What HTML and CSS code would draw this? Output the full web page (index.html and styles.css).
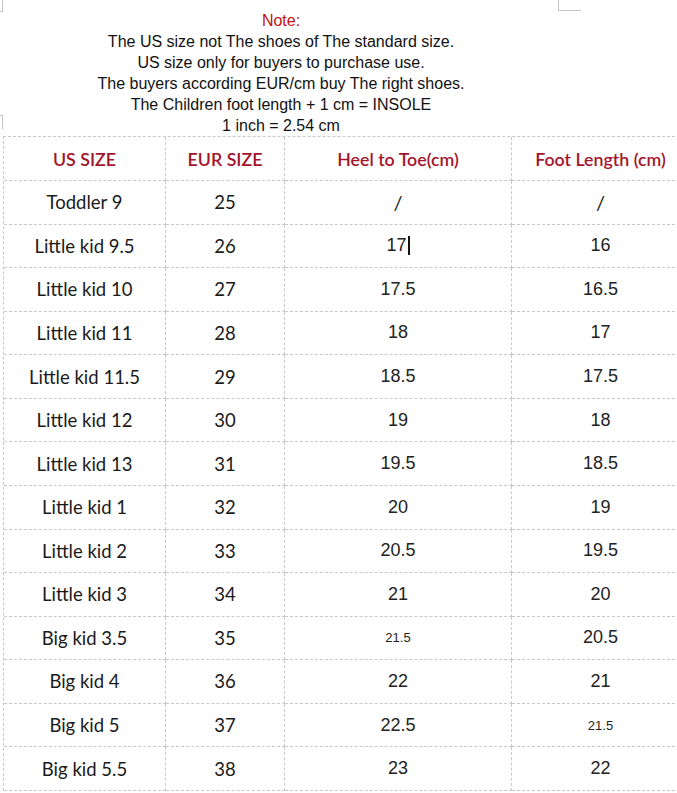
FILE: index.html
```html
<!DOCTYPE html>
<html>
<head>
<meta charset="utf-8">
<link rel="stylesheet" href="styles.css">
</head>
<body>
<div class="page">
  <span class="mark mark-tl"></span>
  <span class="mark mark-tr"></span>
  <span class="mark mark-l"></span>
  <div class="note">
    <div class="note-title">Note:</div>
    <div>The US size not The shoes of The standard size.</div>
    <div>US size only for buyers to purchase use.</div>
    <div>The buyers according EUR/cm buy The right shoes.</div>
    <div>The Children foot length + 1 cm = INSOLE</div>
    <div>1 inch = 2.54 cm</div>
  </div>
  <div class="table">
    <div class="cell head">US SIZE</div>
    <div class="cell head">EUR SIZE</div>
    <div class="cell head">Heel to Toe(cm)</div>
    <div class="cell head">Foot Length (cm)</div>

    <div class="cell c1">Toddler 9</div><div class="cell c2">25</div><div class="cell c3 slash">/</div><div class="cell c4 slash">/</div>
    <div class="cell c1">Little kid 9.5</div><div class="cell c2">26</div><div class="cell c3">17<span class="caret"></span></div><div class="cell c4">16</div>
    <div class="cell c1">Little kid 10</div><div class="cell c2">27</div><div class="cell c3">17.5</div><div class="cell c4">16.5</div>
    <div class="cell c1">Little kid 11</div><div class="cell c2">28</div><div class="cell c3">18</div><div class="cell c4">17</div>
    <div class="cell c1">Little kid 11.5</div><div class="cell c2">29</div><div class="cell c3">18.5</div><div class="cell c4">17.5</div>
    <div class="cell c1">Little kid 12</div><div class="cell c2">30</div><div class="cell c3">19</div><div class="cell c4">18</div>
    <div class="cell c1">Little kid 13</div><div class="cell c2">31</div><div class="cell c3">19.5</div><div class="cell c4">18.5</div>
    <div class="cell c1">Little kid 1</div><div class="cell c2">32</div><div class="cell c3">20</div><div class="cell c4">19</div>
    <div class="cell c1">Little kid 2</div><div class="cell c2">33</div><div class="cell c3">20.5</div><div class="cell c4">19.5</div>
    <div class="cell c1">Little kid 3</div><div class="cell c2">34</div><div class="cell c3">21</div><div class="cell c4">20</div>
    <div class="cell c1">Big kid 3.5</div><div class="cell c2">35</div><div class="cell c3 small">21.5</div><div class="cell c4">20.5</div>
    <div class="cell c1">Big kid 4</div><div class="cell c2">36</div><div class="cell c3">22</div><div class="cell c4">21</div>
    <div class="cell c1">Big kid 5</div><div class="cell c2">37</div><div class="cell c3">22.5</div><div class="cell c4 small">21.5</div>
    <div class="cell c1">Big kid 5.5</div><div class="cell c2">38</div><div class="cell c3">23</div><div class="cell c4">22</div>
  </div>
</div>
</body>
</html>
```
FILE: styles.css
```css
html, body {
  margin: 0;
  padding: 0;
  background: #ffffff;
}
body {
  width: 677px;
  height: 793px;
  overflow: hidden;
}
.page {
  position: relative;
  width: 677px;
  height: 793px;
}
.mark {
  position: absolute;
  border-color: #c4c4c4;
  border-style: solid;
  border-width: 0;
}
.mark-tl {
  left: 0;
  top: 0;
  width: 2px;
  height: 11px;
  border-right-width: 1px;
  border-bottom-width: 1px;
}
.mark-tr {
  left: 558px;
  top: 0;
  width: 22px;
  height: 10px;
  border-left-width: 1px;
  border-bottom-width: 1px;
}
.mark-l {
  left: 0;
  top: 115px;
  width: 2px;
  height: 13px;
  border-right-width: 1px;
  border-top-width: 1px;
}
.note {
  width: 562px;
  padding-top: 10px;
  height: 126px;
  box-sizing: border-box;
  text-align: center;
  font-family: "Liberation Sans", Arial, sans-serif;
  font-size: 16px;
  line-height: 21px;
  color: #111111;
}
.note-title {
  color: #c4100c;
}
.table {
  margin-top: 10px;
  margin-left: 3px;
  width: 686px;
  display: grid;
  grid-template-columns: 162px 119px 227px 178px;
  grid-template-rows: 44px repeat(14, 43.57px);
  border-top: 1px dashed #c9c9c9;
  border-left: 1px dashed #c9c9c9;
}
.cell {
  display: flex;
  align-items: center;
  justify-content: center;
  border-right: 1px dashed #c9c9c9;
  border-bottom: 1px dashed #c9c9c9;
  font-family: Lato, "Open Sans", sans-serif;
  font-size: 18.5px;
  color: #1a1a1a;
  white-space: nowrap;
}
.head {
  font-weight: 600;
  font-size: 17.8px;
  color: #a4142a;
  padding-top: 1px;
}
.c1, .c2 {
  font-family: Lato, "Open Sans", sans-serif;
  font-size: 18.5px;
}
.c3, .c4 {
  font-family: "Liberation Sans", Arial, sans-serif;
  font-size: 18px;
  color: #222222;
}
.slash {
  font-family: Lato, "Open Sans", sans-serif;
  font-size: 20px;
}
.small {
  font-size: 13px;
}
.caret {
  display: inline-block;
  width: 0;
  height: 19px;
  border-left: 2px solid #111111;
  margin-left: 1px;
}
```
